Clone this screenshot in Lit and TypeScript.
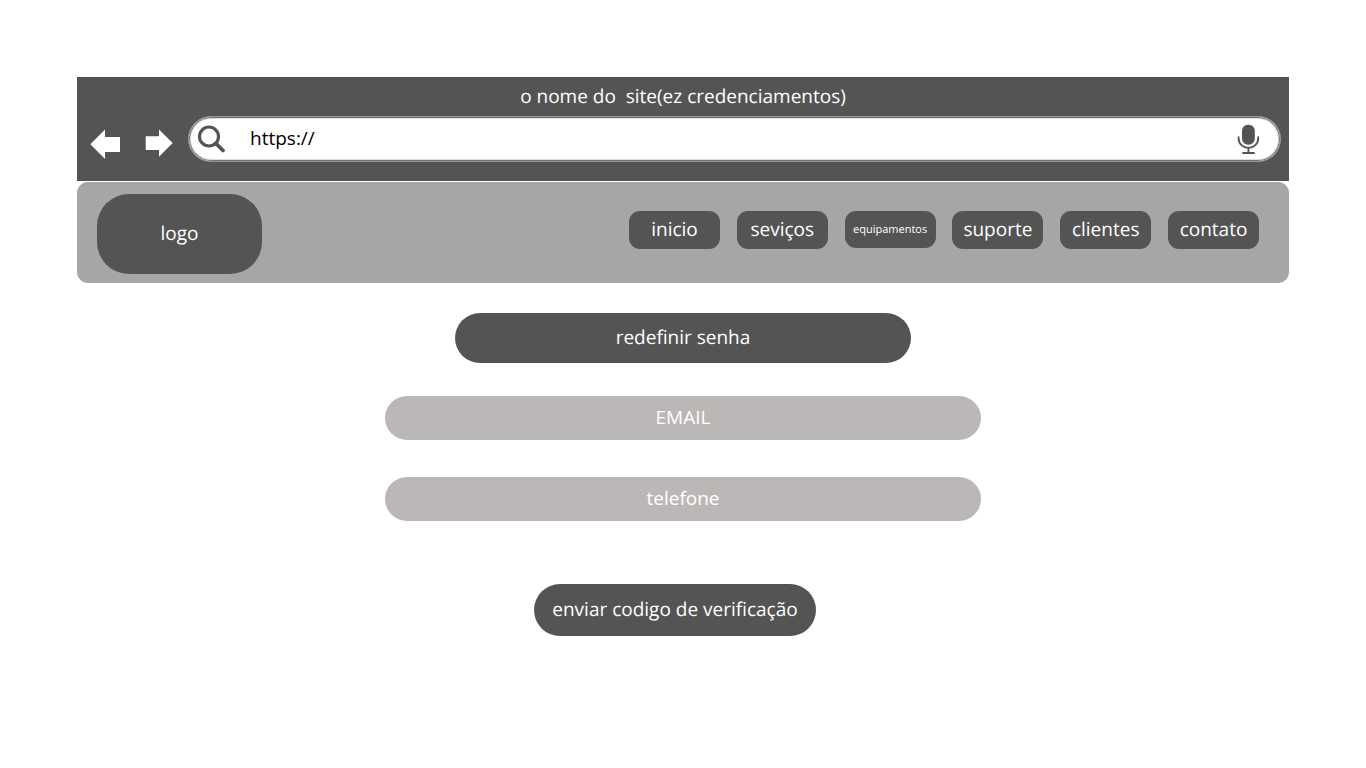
import { LitElement, html, css } from "lit";
import { customElement } from "lit/decorators.js";

interface NavItem {
  label: string;
  href: string;
  small?: boolean;
}

const NAV_ITEMS: NavItem[] = [
  { label: "inicio", href: "#inicio" },
  { label: "seviços", href: "#servicos" },
  { label: "equipamentos", href: "#equipamentos", small: true },
  { label: "suporte", href: "#suporte" },
  { label: "clientes", href: "#clientes" },
  { label: "contato", href: "#contato" },
];

@customElement("browser-bar")
class BrowserBar extends LitElement {
  static styles = css`
    :host {
      display: block;
      background: #545454;
      color: #fff;
      padding: 6px 8px 19px 13px;
    }
    .title {
      font-size: 19px;
      line-height: 26px;
      text-align: center;
      white-space: pre;
      margin: 0 0 7px;
      padding-right: 5px;
    }
    .row {
      display: flex;
      align-items: center;
      height: 46px;
    }
    .step {
      display: block;
      border: 0;
      padding: 10px 0 0;
      background: none;
      cursor: pointer;
    }
    .step svg {
      display: block;
    }
    .forward {
      margin: 0 15px 0 25px;
    }
    .address {
      flex: 1;
      min-width: 0;
      box-sizing: border-box;
      height: 46px;
      display: flex;
      align-items: center;
      padding: 0 20px 0 7px;
      background: #fff;
      border: 1px solid #969696;
      box-shadow: inset 0 0 0 1px #757575, inset 0 0 0 2px #dcdcdc;
      border-radius: 23px;
    }
    .address svg {
      display: block;
      flex: none;
    }
    .url {
      flex: 1;
      min-width: 0;
      border: 0;
      outline: 0;
      box-sizing: border-box;
      padding: 0 0 2px;
      margin: 0 24px;
      height: 28px;
      background: transparent;
      color: #000;
      font: 19px/26px "Open Sans", sans-serif;
    }
    .voice {
      border: 0;
      padding: 0;
      background: none;
      cursor: pointer;
    }
  `;

  render() {
    return html`
      <p class="title">o nome do  site(ez credenciamentos)</p>
      <div class="row">
        <button class="step" type="button" aria-label="voltar">
          <svg width="30" height="30" viewBox="0 0 30 30">
            <path d="M0.300 15.300 15 0.500V8H30V23H15V30Z" fill="#fff" />
          </svg>
        </button>
        <button class="step forward" type="button" aria-label="avançar">
          <svg width="28" height="30" viewBox="0 0 28 30">
            <path d="M27.700 14 14 0.400V7.200H0.700V21H14V27.700Z" fill="#fff" />
          </svg>
        </button>
        <div class="address">
          <svg width="30" height="30" viewBox="0 0 30 30" fill="none" stroke="#545454">
            <circle cx="13" cy="12.500" r="9.500" stroke-width="3.200" />
            <path d="M20 19.500 27 26.500" stroke-width="3.800" stroke-linecap="round" />
          </svg>
          <input class="url" type="text" aria-label="endereço" value="https://" />
          <button class="voice" type="button" aria-label="busca por voz">
            <svg width="24" height="30" viewBox="0 0 24 30">
              <rect x="6" y="0.800" width="12.800" height="20" rx="6" fill="#545454" />
              <path
                d="M2.600 13.200V14.500A9.700 9.300 0 0 0 22.200 14.500V13.200M12.400 23.800V28.500M7 29H18"
                fill="none"
                stroke="#545454"
                stroke-width="1.900"
                stroke-linecap="round"
              />
            </svg>
          </button>
        </div>
      </div>
    `;
  }
}

@customElement("site-header")
class SiteHeader extends LitElement {
  static styles = css`
    :host {
      display: flex;
      justify-content: space-between;
      align-items: flex-start;
      background: #a6a6a6;
      border-radius: 11px;
      padding: 12px 30px 9px 20px;
    }
    a {
      box-sizing: border-box;
      display: flex;
      align-items: center;
      justify-content: center;
      padding-bottom: 2px;
      background: #545454;
      color: #fff;
      text-decoration: none;
      font-size: 19px;
      line-height: 26px;
    }
    .logo {
      width: 165px;
      height: 80px;
      border-radius: 32px;
    }
    .nav {
      display: flex;
      justify-content: space-between;
      width: 630px;
      padding-top: 17px;
    }
    .link {
      width: 91px;
      height: 38px;
      border-radius: 11px;
    }
    .small {
      height: 37px;
      padding-bottom: 0;
      font-size: 11px;
    }
  `;

  render() {
    return html`
      <a class="logo" href="#inicio">logo</a>
      <nav class="nav">
        ${NAV_ITEMS.map(
          (item) => html`<a class=${item.small ? "link small" : "link"} href=${item.href}>${item.label}</a>`
        )}
      </nav>
    `;
  }
}

@customElement("reset-form")
class ResetForm extends LitElement {
  static styles = css`
    :host {
      display: block;
    }
    .form {
      display: flex;
      flex-direction: column;
      align-items: center;
    }
    .heading {
      box-sizing: border-box;
      width: 456px;
      max-width: 100%;
      margin: 0 0 33px;
      padding: 11px 0 13px;
      border-radius: 25px;
      background: #545454;
      color: #fff;
      font-size: 19px;
      font-weight: 400;
      line-height: 26px;
      text-align: center;
    }
    .field {
      box-sizing: border-box;
      width: 596px;
      max-width: 100%;
      height: 44px;
      margin: 0 0 37px;
      padding: 0 22px 2px;
      border: 0;
      border-radius: 22px;
      background: #bbb7b6;
      color: #fff;
      font: 19px/26px "Open Sans", sans-serif;
      text-align: center;
    }
    .field::placeholder {
      color: #fff;
      opacity: 1;
    }
    .send {
      width: 282px;
      height: 52px;
      margin: 26px 16px 0 0;
      padding: 0 0 2px;
      border: 0;
      border-radius: 26px;
      background: #545454;
      color: #fff;
      font: 19px/26px "Open Sans", sans-serif;
      text-rendering: inherit;
      cursor: pointer;
    }
  `;

  render() {
    return html`
      <form class="form" @submit=${(e: Event) => e.preventDefault()}>
        <h1 class="heading">redefinir senha</h1>
        <input class="field" type="email" aria-label="EMAIL" placeholder="EMAIL" />
        <input class="field" type="tel" aria-label="telefone" placeholder="telefone" />
        <button class="send" type="submit">enviar codigo de verificação</button>
      </form>
    `;
  }
}

@customElement("app-root")
class AppRoot extends LitElement {
  static styles = css`
    :host {
      display: block;
      box-sizing: border-box;
      min-height: 100vh;
      padding: 77px;
      background: #fff;
      font-family: "Open Sans", sans-serif;
      text-rendering: geometricPrecision;
    }
    .site {
      margin: 1px 0 30px;
    }
  `;

  render() {
    return html`
      <browser-bar></browser-bar>
      <site-header class="site"></site-header>
      <reset-form></reset-form>
    `;
  }
}
